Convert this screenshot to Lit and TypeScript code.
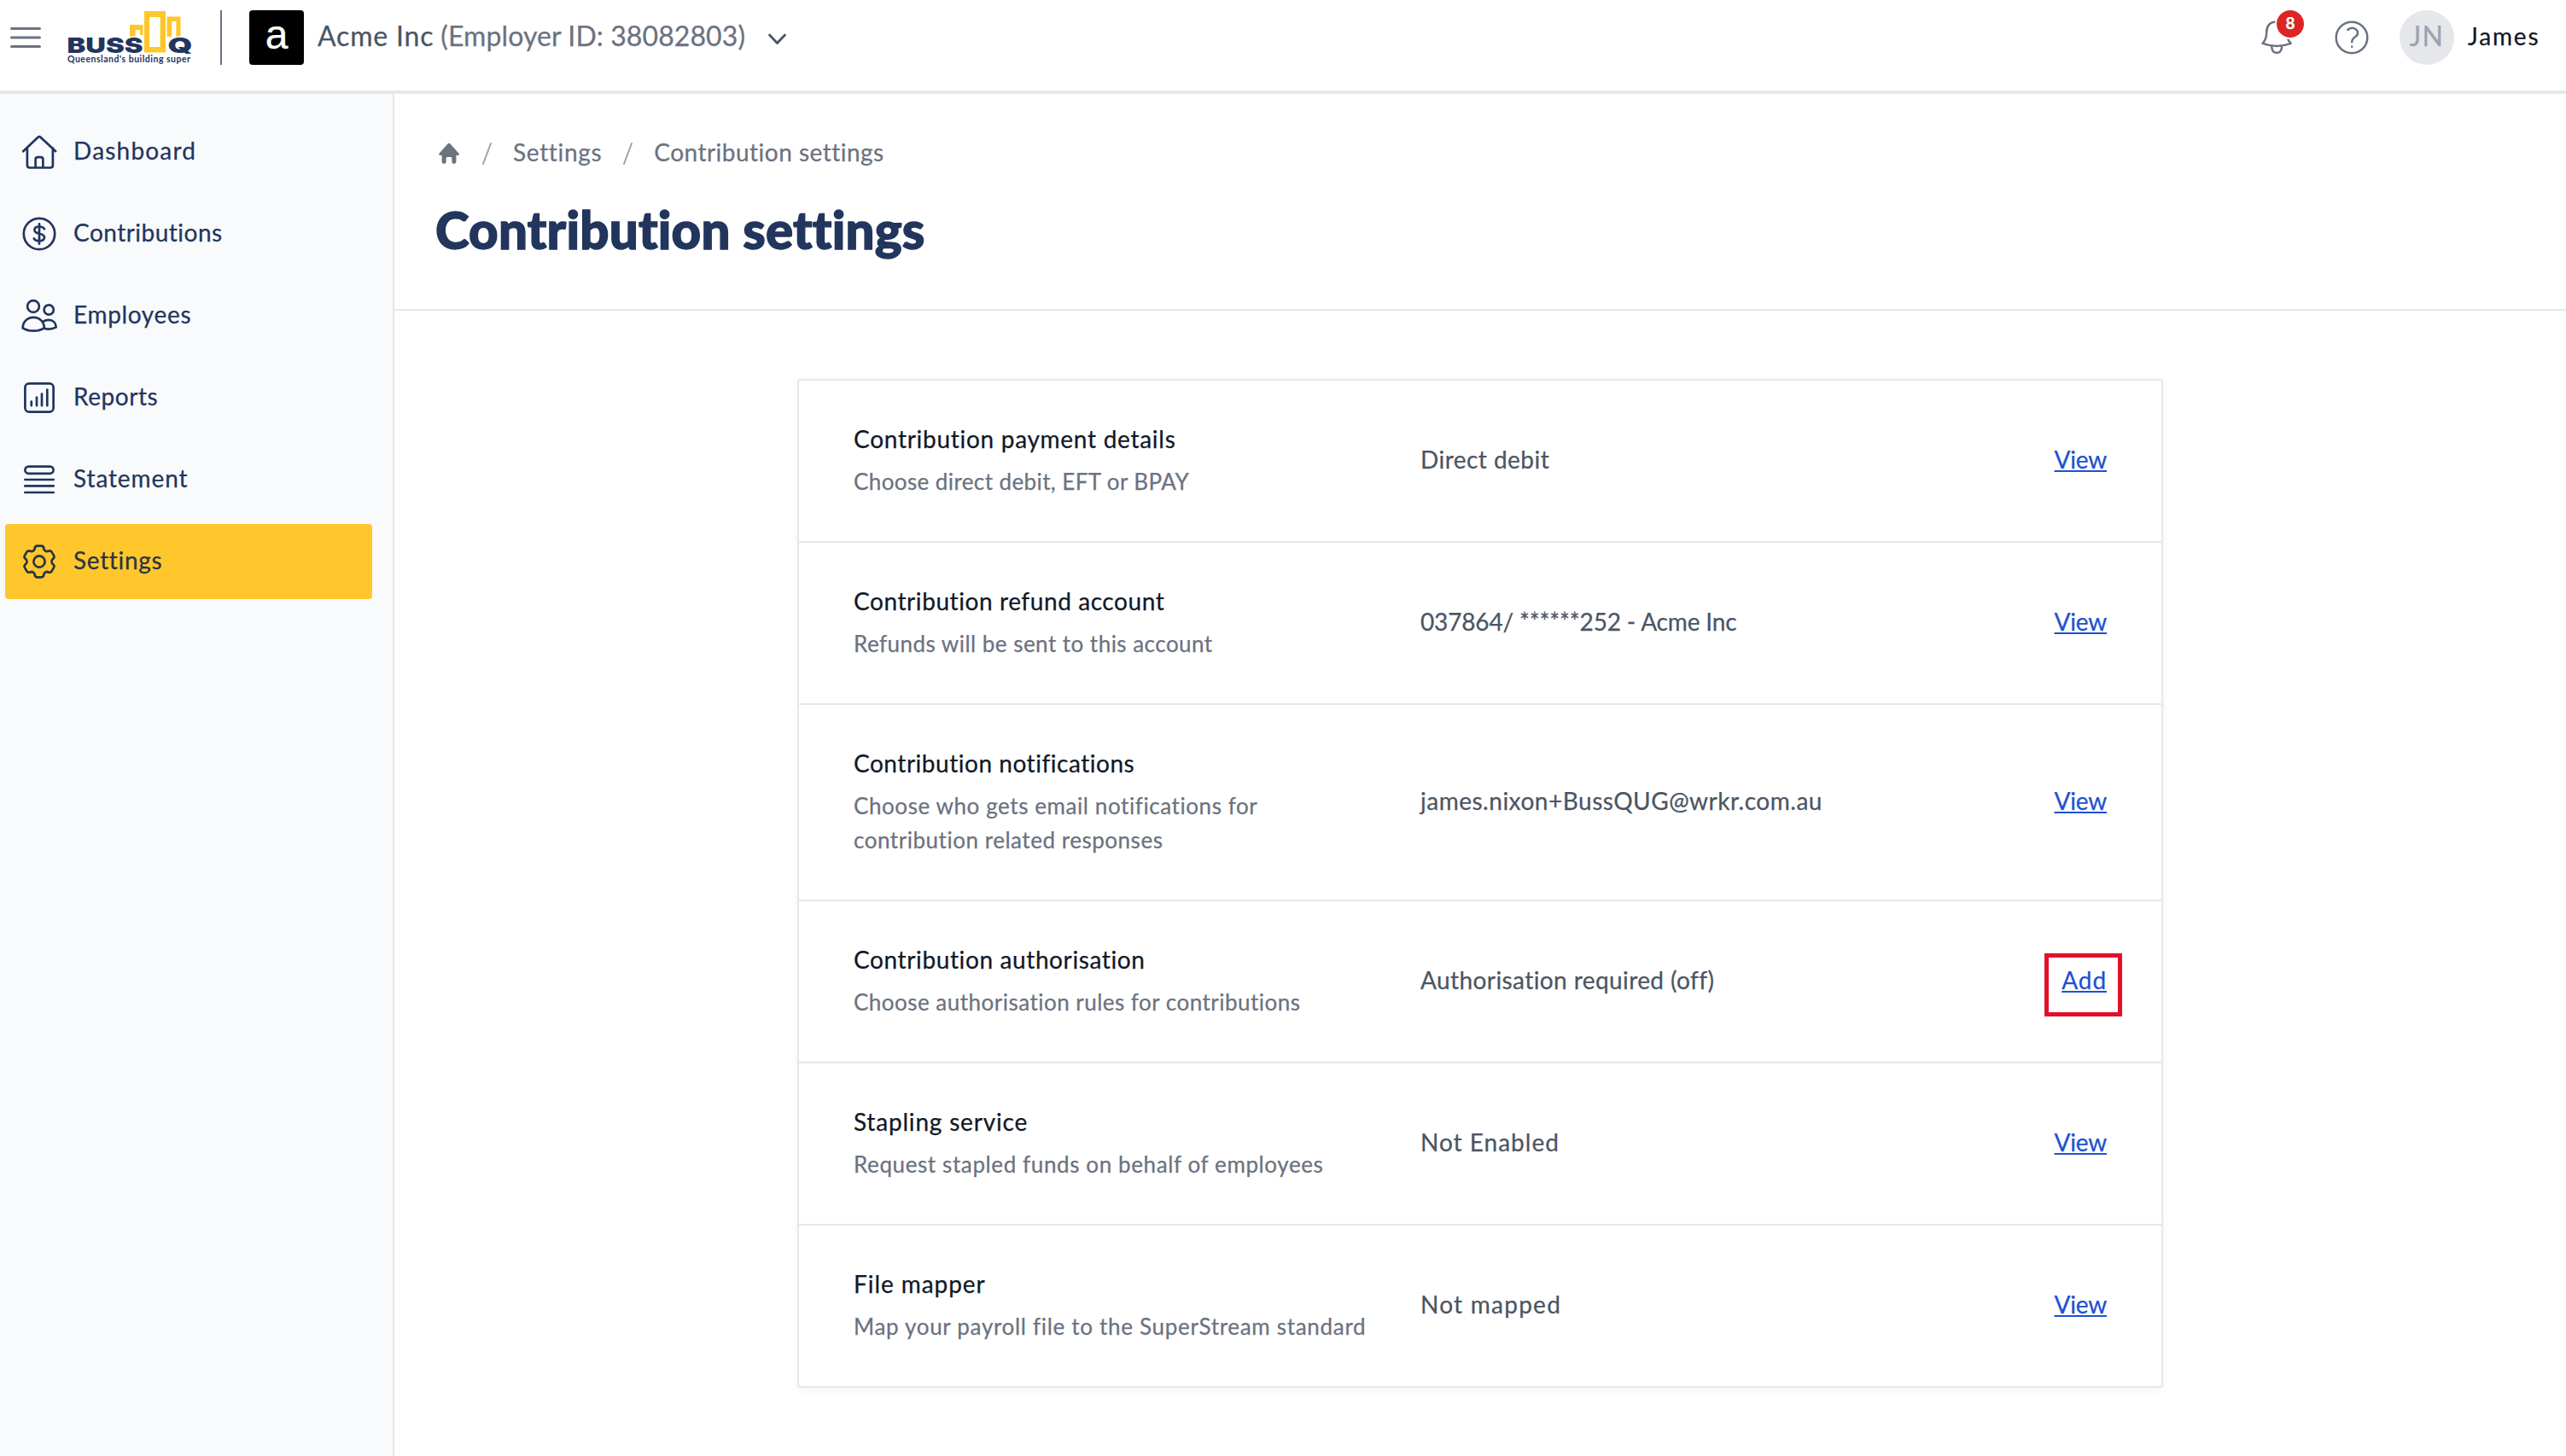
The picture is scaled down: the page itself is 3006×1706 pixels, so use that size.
import { LitElement, html, css, svg, nothing } from "lit";
import { customElement } from "lit/decorators.js";
import { classMap } from "lit/directives/class-map.js";
import { styleMap } from "lit/directives/style-map.js";

type Label = [text: string, tracking: number];

const label = ([text, tracking]: Label, cls = "") =>
  html`<span class=${cls} style=${styleMap({ letterSpacing: `${tracking}px` })}>${text}</span>`;

/** Outline of a six-toothed cog centred on (22, 22). */
const cogPath = (() => {
  const at = (x: number, y: number, deg: number) => {
    const a = (deg * Math.PI) / 180;
    return `${(22 + x * Math.cos(a) - y * Math.sin(a)).toFixed(2)} ${(22 + x * Math.sin(a) + y * Math.cos(a)).toFixed(2)}`;
  };
  let d = "";
  for (let i = 0; i < 6; i++) {
    const r = i * 60;
    d += `${i ? "L" : "M"}${at(-5.6, -14.2, r)}Q${at(-5.2, -18.3, r)} ${at(-2.6, -18.3, r)}L${at(2.6, -18.3, r)}`;
    d += `Q${at(5.2, -18.3, r)} ${at(5.6, -14.2, r)}Q${at(6.9, -11.9, r)} ${at(-5.6, -14.2, r + 60)}`;
  }
  return d + "Z";
})();

const icons = {
  home: svg`<path d="M3.2 21.2 20.3 4.9q1.7-1.6 3.4 0L41.2 21.2M7.9 17.5v20q0 3 3 3h24q3 0 3-3v-20M17.6 40V31q0-2.8 2.8-2.8h3.2q2.8 0 2.8 2.8v9"/>`,
  dollar: svg`<circle cx="22" cy="22" r="18.2"/><path d="M22 10.3v23.4M28 16.3C27 14.3 25 13.5 22 13.5c-3.400 0-5.600 1.500-5.600 4 0 5.800 11.600 2.800 11.600 8.600 0 2.700-2.500 4.300-6 4.300-3 0-5.200-1-6.200-3"/>`,
  people: svg`<circle cx="15" cy="11" r="6.9"/><circle cx="33.200" cy="15" r="5.600"/><path d="M2.700 36.400C2.700 29 8 23.900 15.200 23.900S27.800 29 27.800 36.400C24.500 38.600 20 39.700 15.200 39.700S6 38.600 2.700 36.400ZM26.200 29C28.200 27.500 30.500 26.800 33 26.800c5 0 8.600 3.400 8.700 8.600-2.600 1.500-5.500 2.200-8.700 2.200-1.900 0-3.700-.3-5.300-.8"/>`,
  chart: svg`<rect x="5.400" y="5.400" width="33.200" height="33.200" rx="4.600"/><path d="M12.800 26.600v4.600M19 21.700v9.500M25 17.500v13.700M31.300 12.700v18.500"/>`,
  lines: svg`<rect x="5.400" y="6.600" width="33.200" height="8.200" rx="4.100"/><path d="M5.300 22h33.400M5.300 29.400h33.400M5.300 37h33.400"/>`,
  cog: svg`<path d=${cogPath} /><circle cx="22" cy="22" r="6.600"/>`,
};

const nav: { name: Label; icon: keyof typeof icons; active?: boolean }[] = [
  { name: ["Dashboard", 1.2], icon: "home" },
  { name: ["Contributions", 0.48], icon: "dollar" },
  { name: ["Employees", 0.66], icon: "people" },
  { name: ["Reports", 0.54], icon: "chart" },
  { name: ["Statement", 0.89], icon: "lines" },
  { name: ["Settings", 0.67], icon: "cog", active: true },
];

const rows: { title: Label; about: Label[]; value: Label; action: "View" | "Add" }[] = [
  { title: ["Contribution payment details", 0.72], about: [["Choose direct debit, EFT or BPAY", 0.4]], value: ["Direct debit", 0.46], action: "View" },
  { title: ["Contribution refund account", 0.58], about: [["Refunds will be sent to this account", 0.47]], value: ["037864/ ******252 - Acme Inc", -0.15], action: "View" },
  {
    title: ["Contribution notifications", 0.53],
    about: [["Choose who gets email notifications for", 0.58], ["contribution related responses", 0.53]],
    value: ["james.nixon+BussQUG@wrkr.com.au", 0.51],
    action: "View",
  },
  { title: ["Contribution authorisation", 0.62], about: [["Choose authorisation rules for contributions", 0.48]], value: ["Authorisation required (off)", 0.41], action: "Add" },
  { title: ["Stapling service", 0.81], about: [["Request stapled funds on behalf of employees", 0.61]], value: ["Not Enabled", 1.0], action: "View" },
  { title: ["File mapper", 0.94], about: [["Map your payroll file to the SuperStream standard", 0.69]], value: ["Not mapped", 1.25], action: "View" },
];

const shared = css`
  * { box-sizing: border-box; }
  svg { display: block; flex: none; }
  span { white-space: nowrap; }
  .stroke { fill: none; stroke: currentColor; stroke-linecap: round; stroke-linejoin: round; }
`;

@customElement("top-bar")
export class TopBar extends LitElement {
  static styles = [shared, css`
    :host { display: flex; align-items: flex-start; height: 110px; padding: 12px 31px 0 12px; border-bottom: 4px solid #e5e7eb; background: #fff; box-sizing: border-box; }
    .group { display: flex; align-items: center; height: 64px; }
    .right { margin-left: auto; }
    .muted { color: #6b7280; }
    .logo { margin-left: 31px; }
    .rule { width: 2px; height: 64px; margin: 0 32px 0 29px; background: #6b7280; }
    .tile { display: flex; align-items: center; justify-content: center; width: 64px; height: 64px; padding-bottom: 7px; border-radius: 4px; background: #000; color: #fff; font: 48px/1 "Liberation Sans", sans-serif; }
    .org { display: flex; gap: 8px; margin: 0 26px 0 16px; padding-bottom: 6px; font-size: 32px; color: #4b5563; }
    .chevron { color: #4b5563; margin-top: 3px; }
    .bell { position: relative; color: #6b7280; }
    .badge { position: absolute; left: 20px; top: -12px; width: 36px; height: 36px; border: 2px solid #fff; border-radius: 50%; background: #dc2626; color: #fff; font-size: 19px; font-weight: 700; line-height: 30px; text-align: center; }
    .help { margin: 0 34px 0 44px; }
    .avatar { display: flex; align-items: center; justify-content: center; width: 64px; height: 64px; padding-bottom: 6px; border-radius: 50%; background: #e5e7eb; color: #9ca3af; font-size: 32px; }
    .user { width: 84px; margin-left: 16px; padding-bottom: 5px; color: #111827; }
  `];

  render() {
    return html`
      <div class="group">
        <svg class="stroke muted" width="36" height="24" stroke-width="3"><path d="M1.500 1.500h33M1.500 12h33M1.500 22.500h33" /></svg>
        <svg class="logo" width="150" height="62" viewBox="79 13 150 62">
          <g fill="#ffc72c">
            <path d="M152 29h15.500v12h-3.500v-6h-5.500v8h-6.500z" />
            <path d="M195.500 19.500h16v23.500h-5.200v-18h-5.300v18h-5.500z" />
          </g>
          <g fill="#22355d" font-family="Inter, sans-serif" font-weight="900" font-size="25" stroke="#fff" stroke-width="3" paint-order="stroke">
            <text x="78.500" y="61.500" textLength="89" lengthAdjust="spacingAndGlyphs">BUSS</text>
            <text x="196.500" y="61.500" textLength="29" lengthAdjust="spacingAndGlyphs">Q</text>
          </g>
          <path fill="#ffc72c" fill-rule="evenodd" d="M169 13h25v48.500h-25zM175 20v35h12.600v-35z" />
          <text x="79" y="73" fill="#22355d" font-family="Lato, sans-serif" font-weight="700" font-size="10.500" textLength="144">Queensland's building super</text>
        </svg>
        <div class="rule"></div>
        <div class="tile">a</div>
        <div class="org">${label(["Acme Inc", 0.82])}${label(["(Employer ID: 38082803)", 0.09], "muted")}</div>
        <svg class="chevron stroke" width="24" height="14" stroke-width="2.800"><path d="m2.500 2 9 9.500 9-9.500" /></svg>
      </div>
      <div class="group right">
        <div class="bell">
          <svg class="stroke" width="44" height="44" stroke-width="2.500">
            <path d="M22 3.600C13.500 3.600 10.200 9 10.200 16c0 6.500-1.400 9.400-4.700 12.800 10.500 3.900 22.700 3.900 33.200 0-2.400-2.300-3.600-4.200-4.200-7.200M16.200 32.500c.2 4.500 2.400 7.400 6 7.400s5.700-2.900 5.900-7.400" />
          </svg>
          <span class="badge">8</span>
        </div>
        <svg class="help stroke muted" width="44" height="44" stroke-width="2.500">
          <circle cx="22" cy="22" r="18.300" />
          <path d="M17.300 13c2-1.900 4.600-2.500 7-1.900 5.200 1.400 6.300 6.900 2.300 9.600-2.500 1.700-4.400 3-4.400 6.500M22.200 32.500v.2" />
        </svg>
        <div class="avatar">${label(["JN", 1.2])}</div>
        ${label(["James", 1.87], "user")}
      </div>`;
  }
}

@customElement("side-nav")
export class SideNav extends LitElement {
  static styles = [shared, css`
    :host { display: flex; flex-direction: column; gap: 8px; width: 462px; padding: 24px 24px 0 6px; border-right: 2px solid #e5e7eb; background: #f9fafc; box-sizing: border-box; }
    .item { display: flex; align-items: center; gap: 18px; height: 88px; padding-left: 18px; border-radius: 4px; color: #22355d; }
    .item.active { background: #ffc72c; color: #283442; }
    .name { padding-bottom: 5px; }
  `];

  render() {
    return nav.map((n) => html`
      <div class=${classMap({ item: true, active: !!n.active })}>
        <svg class="stroke" width="44" height="44" stroke-width="2.700">${icons[n.icon]}</svg>
        ${label(n.name, "name")}
      </div>`);
  }
}

@customElement("settings-card")
export class SettingsCard extends LitElement {
  static styles = [shared, css`
    :host { display: block; width: 1600px; border: 2px solid #e5e7eb; border-radius: 4px; box-shadow: 0 3px 8px rgba(0, 0, 0, 0.05); background: #fff; box-sizing: border-box; }
    .row { display: grid; grid-template-columns: 664px 1fr auto; align-items: center; padding: 0 64px; }
    .row + .row { border-top: 2px solid #e5e7eb; }
    .text { display: flex; flex-direction: column; padding: 48px 0 50px; line-height: 40px; }
    .title { margin-bottom: 10px; color: #111827; }
    .about { font-size: 26px; color: #6b7280; }
    .value { padding-bottom: 5px; color: #4b5563; }
    .action { position: relative; padding-bottom: 5px; color: #1d51d0; text-decoration: underline; text-decoration-thickness: 2px; text-underline-offset: 2px; }
    .marker { position: absolute; left: -20px; top: -14px; width: 91px; height: 74px; border: 5px solid #e4102a; }
  `];

  render() {
    return rows.map((r) => html`
      <div class="row">
        <div class="text">${label(r.title, "title")}${r.about.map((a) => label(a, "about"))}</div>
        ${label(r.value, "value")}
        <div class="action">
          ${label([r.action, r.action === "Add" ? 0.9 : -0.2])}
          ${r.action === "Add" ? html`<div class="marker"></div>` : nothing}
        </div>
      </div>`);
  }
}

@customElement("app-root")
export class AppRoot extends LitElement {
  static styles = [shared, css`
    :host { display: flex; flex-direction: column; height: 100vh; overflow: hidden; background: #fff; font: 28px Lato, "Open Sans", sans-serif; font-variant-ligatures: none; -webkit-text-stroke: 0.25px currentColor; }
    .body { display: flex; flex: 1; min-height: 0; }
    main { flex: 1; }
    .head { height: 254px; padding: 46px 0 0 48px; border-bottom: 2px solid #e5e7eb; }
    .crumbs { display: flex; align-items: center; height: 48px; color: #6b7280; }
    .crumbs span { padding-bottom: 4px; }
    .home { margin: 0 23px 0 3px; }
    .slash { color: #9ca3af; margin-right: 23px; }
    .here { margin-left: 22px; }
    h1 { margin: 29px 0 0; color: #22355d; font-size: 60px; font-weight: 900; line-height: 72px; -webkit-text-stroke: 1.4px currentColor; }
    .content { display: flex; justify-content: center; padding-top: 80px; }
  `];

  render() {
    const slash = html`<svg class="slash stroke" width="16" height="28" stroke-width="2"><path d="M13 2 4 26" /></svg>`;
    return html`
      <top-bar></top-bar>
      <div class="body">
        <side-nav></side-nav>
        <main>
          <div class="head">
            <div class="crumbs">
              <svg class="home" width="26" height="26" fill="currentColor"><path d="M11.300 1.800q1.700-1.900 3.400 0l9.800 11q1 1.700-.9 2.200h-2.200v7.600q0 2.200-2.200 2.200h-1q-1.800 0-1.800-2v-4.300q0-1.500-1.500-1.500h-3.800q-1.500 0-1.500 1.500v4.300q0 2-1.800 2h-1q-2.200 0-2.200-2.200V15H2.400q-1.900-.5-.9-2.200z" /></svg>
              ${slash}${label(["Settings", 0.67])}
              <span class="here"></span>${slash}${label(["Contribution settings", 0.48])}
            </div>
            <h1>${label(["Contribution settings", 0.21])}</h1>
          </div>
          <div class="content"><settings-card></settings-card></div>
        </main>
      </div>`;
  }
}
